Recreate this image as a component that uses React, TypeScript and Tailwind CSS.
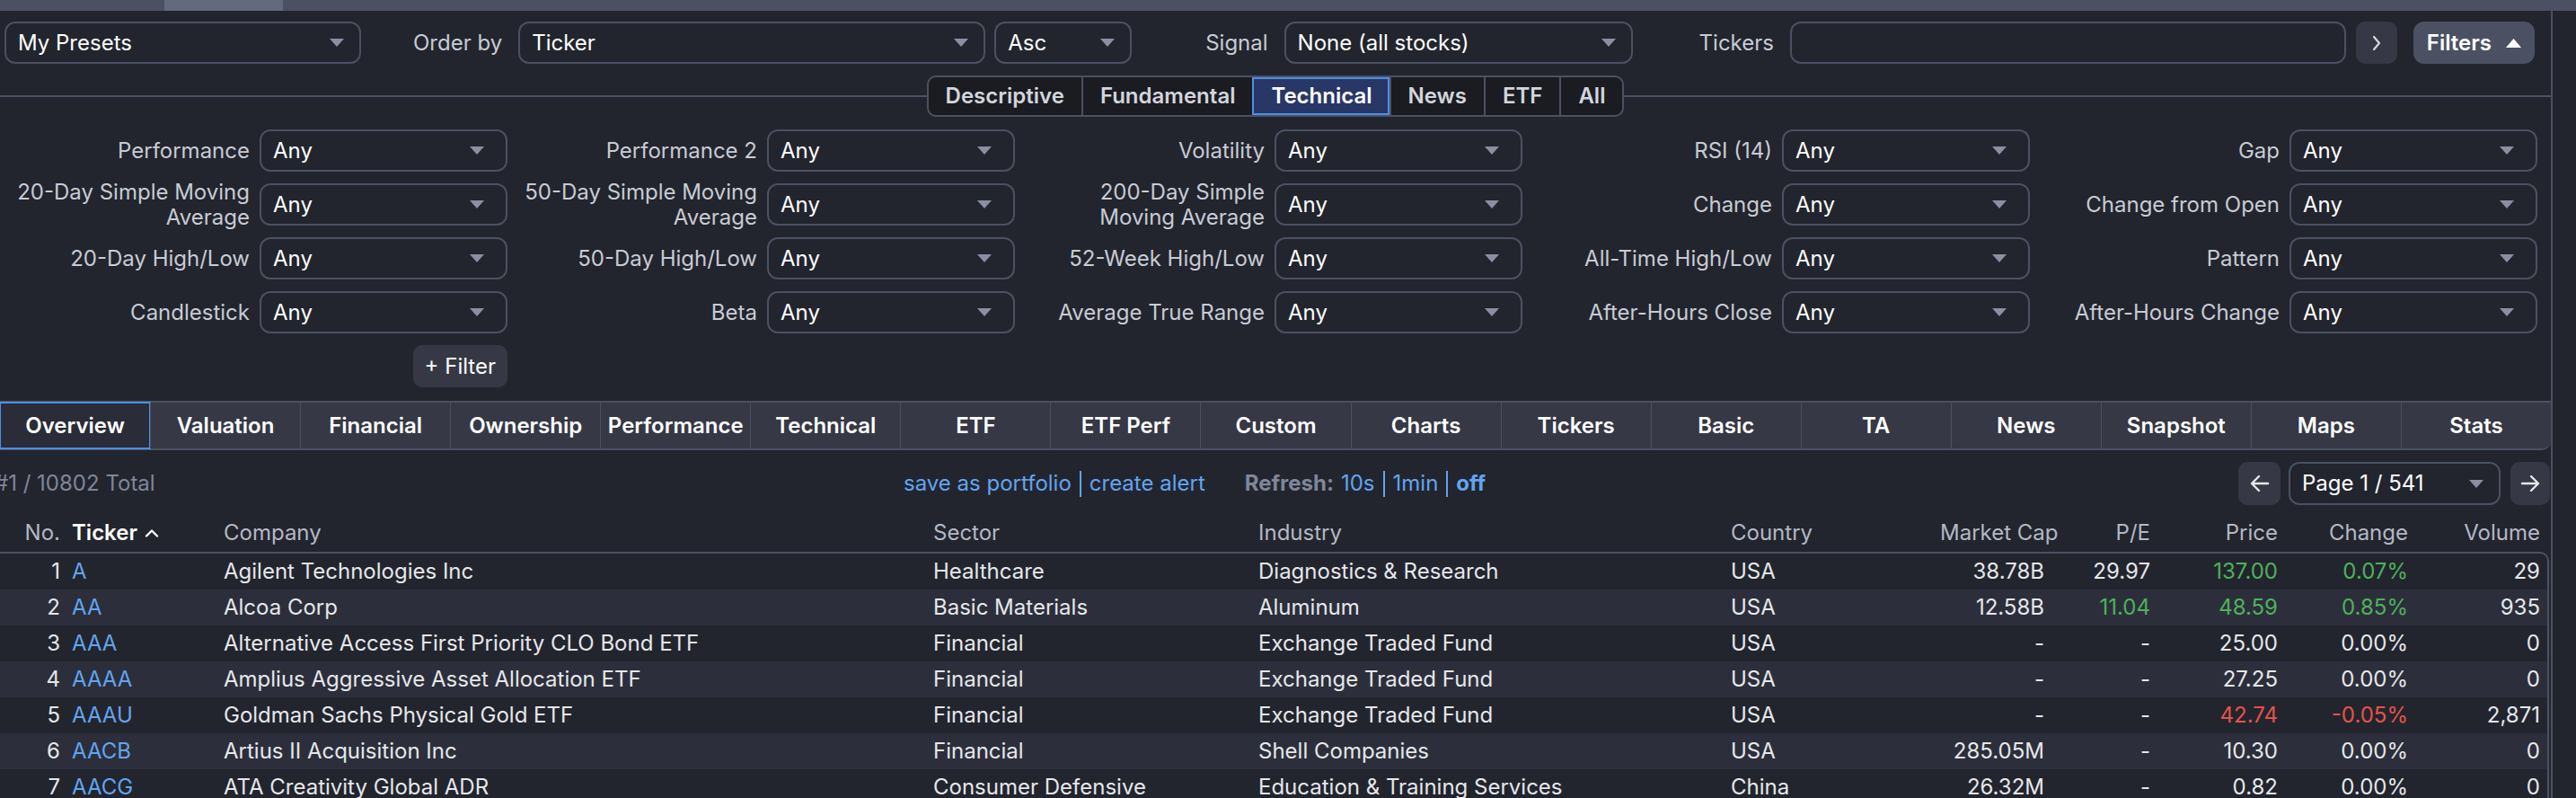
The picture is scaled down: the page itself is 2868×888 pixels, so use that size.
import React from 'react';

type Row = {
  no: number;
  ticker: string;
  company: string;
  sector: string;
  industry: string;
  country: string;
  cap: string;
  pe: string;
  peUp?: boolean;
  price: string;
  change: string;
  dir: 'up' | 'down' | 'flat';
  volume: string;
};

const rows: Row[] = [
  { no: 1, ticker: 'A', company: 'Agilent Technologies Inc', sector: 'Healthcare', industry: 'Diagnostics & Research', country: 'USA', cap: '38.78B', pe: '29.97', price: '137.00', change: '0.07%', dir: 'up', volume: '29' },
  { no: 2, ticker: 'AA', company: 'Alcoa Corp', sector: 'Basic Materials', industry: 'Aluminum', country: 'USA', cap: '12.58B', pe: '11.04', peUp: true, price: '48.59', change: '0.85%', dir: 'up', volume: '935' },
  { no: 3, ticker: 'AAA', company: 'Alternative Access First Priority CLO Bond ETF', sector: 'Financial', industry: 'Exchange Traded Fund', country: 'USA', cap: '-', pe: '-', price: '25.00', change: '0.00%', dir: 'flat', volume: '0' },
  { no: 4, ticker: 'AAAA', company: 'Amplius Aggressive Asset Allocation ETF', sector: 'Financial', industry: 'Exchange Traded Fund', country: 'USA', cap: '-', pe: '-', price: '27.25', change: '0.00%', dir: 'flat', volume: '0' },
  { no: 5, ticker: 'AAAU', company: 'Goldman Sachs Physical Gold ETF', sector: 'Financial', industry: 'Exchange Traded Fund', country: 'USA', cap: '-', pe: '-', price: '42.74', change: '-0.05%', dir: 'down', volume: '2,871' },
  { no: 6, ticker: 'AACB', company: 'Artius II Acquisition Inc', sector: 'Financial', industry: 'Shell Companies', country: 'USA', cap: '285.05M', pe: '-', price: '10.30', change: '0.00%', dir: 'flat', volume: '0' },
  { no: 7, ticker: 'AACG', company: 'ATA Creativity Global ADR', sector: 'Consumer Defensive', industry: 'Education & Training Services', country: 'China', cap: '26.32M', pe: '-', price: '0.82', change: '0.00%', dir: 'flat', volume: '0' },
];

const filterRows: string[][][] = [
  [['Performance'], ['Performance 2'], ['Volatility'], ['RSI (14)'], ['Gap']],
  [
    ['20-Day Simple Moving', 'Average'],
    ['50-Day Simple Moving', 'Average'],
    ['200-Day Simple', 'Moving Average'],
    ['Change'],
    ['Change from Open'],
  ],
  [['20-Day High/Low'], ['50-Day High/Low'], ['52-Week High/Low'], ['All-Time High/Low'], ['Pattern']],
  [['Candlestick'], ['Beta'], ['Average True Range'], ['After-Hours Close'], ['After-Hours Change']],
];

const groupTabs = ['Descriptive', 'Fundamental', 'Technical', 'News', 'ETF', 'All'];
const viewTabs = ['Overview', 'Valuation', 'Financial', 'Ownership', 'Performance', 'Technical', 'ETF', 'ETF Perf', 'Custom', 'Charts', 'Tickers', 'Basic', 'TA', 'News', 'Snapshot', 'Maps', 'Stats'];

const Caret = ({ color = '#8a8fa3' }: { color?: string }) => (
  <svg width="16" height="9" viewBox="0 0 16 9" className="shrink-0">
    <path d="M0 0h16L8 9z" fill={color} />
  </svg>
);

const Select = ({ value, className = '' }: { value: string; className?: string }) => (
  <div className={`h-[47px] flex items-center justify-between pl-[13px] pr-[17px] border-2 border-[#4b5162] rounded-[12px] bg-[#22252e] text-white shrink-0 ${className}`}>
    <span className="whitespace-nowrap">{value}</span>
    <Caret />
  </div>
);

const Sep = () => <span className="inline-block w-[2px] h-[29px] bg-[#62a4f0] mx-[9px] align-middle" />;

const App = () => {
  return (
    <div className="w-[2868px] h-[888px] overflow-hidden bg-[#22252e] text-[#e6e7eb] text-[24px] leading-[1.15] font-['Inter','Liberation_Sans',sans-serif]">
      {/* ---------- TOP STRIP ---------- */}
      <div className="h-[12px] bg-[#4b5162] flex">
        <div className="w-[183px]" />
        <div className="w-[132px] bg-[#646a7e]" />
      </div>

      <div className="flex h-[876px]">
        <div className="w-[2842px] shrink-0 border-r-2 border-[#4b5162] overflow-hidden">
          {/* ---------- CONTROLS ---------- */}
          <div className="flex items-center mt-[12px] h-[47px]">
            <Select value="My Presets" className="ml-[5px] w-[397px]" />
            <span className="ml-[58px] mr-[18px] text-[#c8cbd4] whitespace-nowrap">Order by</span>
            <Select value="Ticker" className="w-[520px]" />
            <Select value="Asc" className="ml-[10px] w-[153px]" />
            <span className="ml-[82px] mr-[18px] text-[#c8cbd4]">Signal</span>
            <Select value="None (all stocks)" className="w-[388px]" />
            <span className="ml-[74px] mr-[18px] text-[#c8cbd4]">Tickers</span>
            <div className="w-[619px] h-[47px] border-2 border-[#4b5162] rounded-[12px] shrink-0" />
            <button className="ml-[11px] w-[46px] h-[47px] rounded-[10px] bg-[#363945] text-[#d6d8de] flex items-center justify-center">
              <svg width="12" height="20" viewBox="0 0 12 20"><path d="M3 3l6 7-6 7" stroke="#d6d8de" strokeWidth="2.2" fill="none" strokeLinecap="round" strokeLinejoin="round" /></svg>
            </button>
            <button className="ml-[18px] w-[135px] h-[47px] rounded-[12px] bg-[#4b5162] text-white font-semibold flex items-center justify-center gap-[16px]">
              Filters
              <svg width="17" height="10" viewBox="0 0 17 10"><path d="M0 10h17L8.5 0z" fill="#fff" /></svg>
            </button>
          </div>

          {/* ---------- FILTER GROUP TABS ---------- */}
          <div className="flex items-center mt-[13px]">
            <div className="flex-1 h-[2px] bg-[#4b5162]" />
            <div className="flex h-[46px] rounded-[10px] border-2 border-[#4b5162] bg-[#1a1c22] overflow-hidden font-semibold text-[#d3d5dc]">
              {groupTabs.map((t, i) => (
                <div
                  key={t}
                  className={`px-[19px] flex items-center ${i > 0 ? 'border-l-2 border-[#4b5162]' : ''} ${t === 'Technical' ? 'bg-[#283766] text-white outline-2 outline-[#4a8fe7] -outline-offset-2' : ''}`}
                >
                  {t}
                </div>
              ))}
            </div>
            <div className="flex-1 h-[2px] bg-[#4b5162]" />
          </div>

          {/* ---------- FILTERS ---------- */}
          <div className="grid grid-cols-5 w-[2825px] gap-y-[13px] mt-[14px]">
            {filterRows.map((r, ri) =>
              r.map((label, ci) => (
                <div key={`${ri}-${ci}`} className="flex items-center justify-end gap-[11px] h-[47px]">
                  <span className="text-right text-[#c8cbd4] whitespace-nowrap leading-[28px]">
                    {label.map((l, li) => (
                      <span key={li} className="block">{l}</span>
                    ))}
                  </span>
                  <Select value="Any" className="w-[276px] pr-[24px]" />
                </div>
              ))
            )}
            <div className="flex justify-end">
              <button className="h-[47px] px-[13px] rounded-[10px] bg-[#363945] text-white">+ Filter</button>
            </div>
          </div>

          {/* ---------- VIEW TABS ---------- */}
          <div className="grid grid-cols-17 w-[2840px] mt-[15px] h-[55px] border-y-2 border-[#4b5162] bg-[#363845] rounded-br-[10px] font-semibold text-white">
            {viewTabs.map((t, i) => (
              <div
                key={t}
                className={`flex items-center justify-center ${i > 0 ? 'border-l border-[#4b5162]' : ''} ${i === 0 ? 'bg-[#2a2c37] outline-2 outline-[#4a8fe7] -outline-offset-1' : ''}`}
              >
                {t}
              </div>
            ))}
          </div>

          {/* ---------- STATUS ---------- */}
          <div className="flex items-center h-[48px] mt-[13px]">
            <div className="w-[1006px] shrink-0 text-[#80869a] -ml-[6px] whitespace-nowrap">#1 / 10802 Total</div>
            <span className="text-[#62a4f0] ml-[6px]">save as portfolio</span>
            <Sep />
            <span className="text-[#62a4f0]">create alert</span>
            <span className="ml-[44px] text-[#80869a] font-bold">Refresh:</span>
            <span className="ml-[8px] text-[#62a4f0]">10s</span>
            <Sep />
            <span className="text-[#62a4f0]">1min</span>
            <Sep />
            <span className="text-[#62a4f0] font-bold">off</span>
            <div className="flex-1" />
            <button className="w-[47px] h-[48px] rounded-[10px] bg-[#363945] flex items-center justify-center">
              <svg width="22" height="20" viewBox="0 0 22 20"><path d="M20 10H3M10 2L2 10l8 8" stroke="#e6e7eb" strokeWidth="2.4" fill="none" strokeLinecap="round" strokeLinejoin="round" /></svg>
            </button>
            <Select value="Page 1 / 541" className="ml-[9px] w-[236px] h-[48px] pr-[14px]" />
            <button className="ml-[11px] mr-[1px] w-[44px] h-[48px] rounded-[10px] bg-[#363945] flex items-center justify-center">
              <svg width="22" height="20" viewBox="0 0 22 20"><path d="M2 10h17M12 2l8 8-8 8" stroke="#e6e7eb" strokeWidth="2.4" fill="none" strokeLinecap="round" strokeLinejoin="round" /></svg>
            </button>
          </div>

          {/* ---------- TABLE ---------- */}
          <div className="w-[2838px]">
            <div className="grid grid-cols-[72px_168px_790px_362px_526px_242px_125px_118px_142px_145px_148px] h-[52px] pt-[10px] items-center text-[#b4b8c4] whitespace-nowrap">
              <div className="text-right pr-[5px]">No.</div>
              <div className="pl-[8px] flex items-center gap-[8px] text-white font-semibold">
                Ticker
                <svg width="16" height="10" viewBox="0 0 16 10"><path d="M2 8.5L8 2.5l6 6" stroke="#fff" strokeWidth="2.4" fill="none" strokeLinecap="round" strokeLinejoin="round" /></svg>
              </div>
              <div className="pl-[9px]">Company</div>
              <div className="pl-[9px]">Sector</div>
              <div className="pl-[9px]">Industry</div>
              <div className="pl-[9px]">Country</div>
              <div className="text-right pr-[9px]">Market Cap</div>
              <div className="text-right pr-[9px]">P/E</div>
              <div className="text-right pr-[9px]">Price</div>
              <div className="text-right pr-[9px]">Change</div>
              <div className="text-right pr-[10px]">Volume</div>
            </div>
            <div className="border-t-2 border-r-2 border-[#4b5162] rounded-tr-[10px] overflow-hidden">
              {rows.map((r, i) => {
                const col = r.dir === 'up' ? 'text-[#4fb15a]' : r.dir === 'down' ? 'text-[#e5534b]' : 'text-[#e6e7eb]';
                return (
                  <div
                    key={r.ticker}
                    className={`grid grid-cols-[72px_168px_790px_362px_526px_242px_125px_118px_142px_145px_146px] h-[40px] items-center whitespace-nowrap ${i % 2 === 1 ? 'bg-[#2c2f3b]' : ''}`}
                  >
                    <div className="text-right pr-[5px]">{r.no}</div>
                    <div className="pl-[8px] text-[#62a4f0]">{r.ticker}</div>
                    <div className="pl-[9px]">{r.company}</div>
                    <div className="pl-[9px]">{r.sector}</div>
                    <div className="pl-[9px]">{r.industry}</div>
                    <div className="pl-[9px]">{r.country}</div>
                    <div className="text-right pr-[9px]">{r.cap}</div>
                    <div className={`text-right pr-[9px] ${r.peUp ? 'text-[#4fb15a]' : ''}`}>{r.pe}</div>
                    <div className={`text-right pr-[9px] ${col}`}>{r.price}</div>
                    <div className={`text-right pr-[9px] ${col}`}>{r.change}</div>
                    <div className="text-right pr-[8px]">{r.volume}</div>
                  </div>
                );
              })}
            </div>
          </div>
        </div>
        <div className="flex-1" />
      </div>
    </div>
  );
};

export default App;
